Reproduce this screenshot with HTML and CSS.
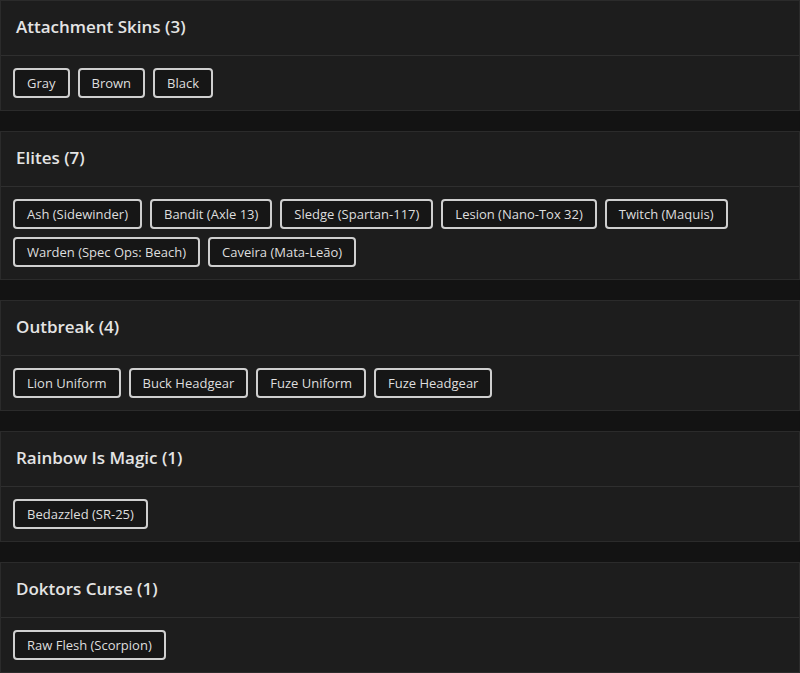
FILE: index.html
```html
<!DOCTYPE html>
<html>
<head>
<meta charset="utf-8">
<link rel="stylesheet" href="styles.css">
</head>
<body>
<div class="list">
  <section class="card">
    <div class="card-header">Attachment Skins (3)</div>
    <div class="card-body">
      <span class="chip">Gray</span>
      <span class="chip">Brown</span>
      <span class="chip">Black</span>
    </div>
  </section>
  <section class="card">
    <div class="card-header">Elites (7)</div>
    <div class="card-body">
      <span class="chip">Ash (Sidewinder)</span>
      <span class="chip">Bandit (Axle 13)</span>
      <span class="chip">Sledge (Spartan-117)</span>
      <span class="chip">Lesion (Nano-Tox 32)</span>
      <span class="chip">Twitch (Maquis)</span>
      <span class="chip">Warden (Spec Ops: Beach)</span>
      <span class="chip">Caveira (Mata-Leão)</span>
    </div>
  </section>
  <section class="card">
    <div class="card-header">Outbreak (4)</div>
    <div class="card-body">
      <span class="chip">Lion Uniform</span>
      <span class="chip">Buck Headgear</span>
      <span class="chip">Fuze Uniform</span>
      <span class="chip">Fuze Headgear</span>
    </div>
  </section>
  <section class="card">
    <div class="card-header">Rainbow Is Magic (1)</div>
    <div class="card-body">
      <span class="chip">Bedazzled (SR-25)</span>
    </div>
  </section>
  <section class="card">
    <div class="card-header">Doktors Curse (1)</div>
    <div class="card-body">
      <span class="chip">Raw Flesh (Scorpion)</span>
    </div>
  </section>
</div>
</body>
</html>
```
FILE: styles.css
```css
html, body {
  margin: 0;
  padding: 0;
  background: #131313;
}
body {
  font-family: "Open Sans", "DejaVu Sans", sans-serif;
  color: #e6e6e6;
}
.list {
  display: flex;
  flex-direction: column;
  gap: 20px;
}
.card {
  background: #1d1d1d;
  border: 1px solid #2b2b2b;
}
.card-header {
  height: 55px;
  box-sizing: border-box;
  padding: 0 15px 3px;
  display: flex;
  align-items: center;
  font-size: 17px;
  font-weight: 600;
  color: #e4e4e4;
  border-bottom: 1px solid #2f2f2f;
}
.card-body {
  padding: 12px;
  display: flex;
  flex-wrap: wrap;
  gap: 8px;
}
.chip {
  display: inline-flex;
  align-items: center;
  height: 30px;
  box-sizing: border-box;
  padding: 0 12px;
  border: 2px solid #cfcfcf;
  border-radius: 4px;
  background: #161616;
  font-size: 13px;
  color: #dedede;
}
```
